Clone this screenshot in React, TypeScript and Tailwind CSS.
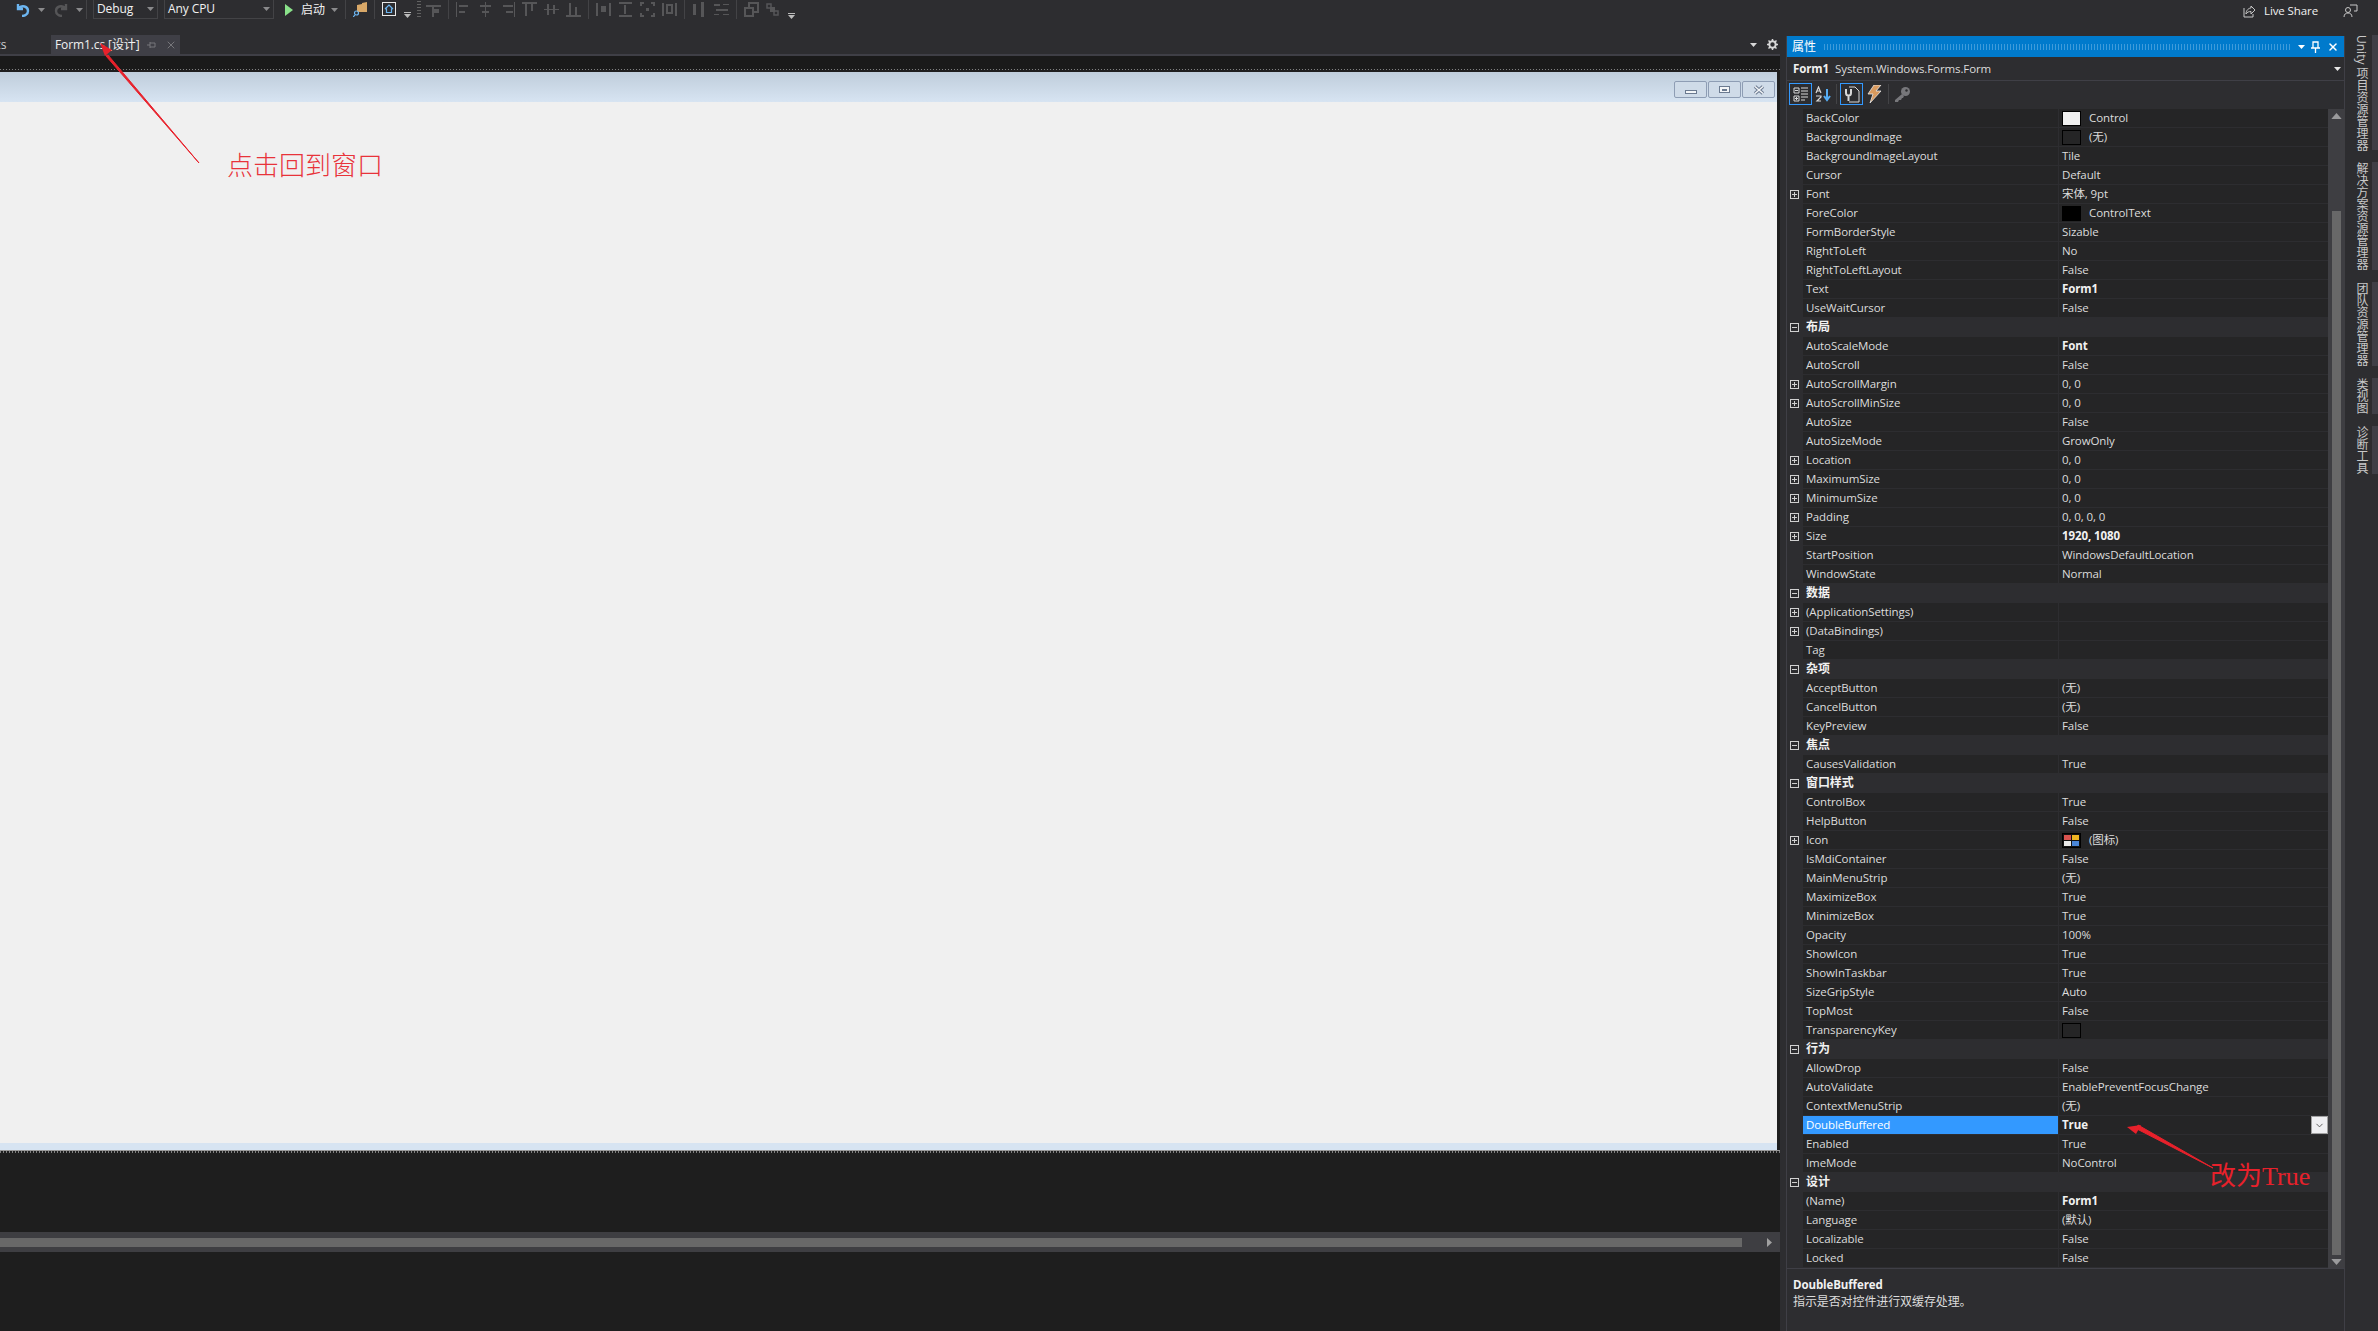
import React from 'react';
import { ChevronDown, X } from 'lucide-react';

const SANS = "font-['Open_Sans','Noto_Sans_CJK_SC',sans-serif]";

type Row = {
  name: string;
  value?: string;
  bold?: boolean;
  expand?: boolean;
  swatch?: string;
  icon?: boolean;
  section?: boolean;
  selected?: boolean;
};

const rows: Row[] = [
  { name: 'BackColor', value: 'Control', swatch: 'bg-[#f0f0f0]' },
  { name: 'BackgroundImage', value: '(无)', swatch: 'bg-[#252526]' },
  { name: 'BackgroundImageLayout', value: 'Tile' },
  { name: 'Cursor', value: 'Default' },
  { name: 'Font', value: '宋体, 9pt', expand: true },
  { name: 'ForeColor', value: 'ControlText', swatch: 'bg-black' },
  { name: 'FormBorderStyle', value: 'Sizable' },
  { name: 'RightToLeft', value: 'No' },
  { name: 'RightToLeftLayout', value: 'False' },
  { name: 'Text', value: 'Form1', bold: true },
  { name: 'UseWaitCursor', value: 'False' },
  { name: '布局', section: true },
  { name: 'AutoScaleMode', value: 'Font', bold: true },
  { name: 'AutoScroll', value: 'False' },
  { name: 'AutoScrollMargin', value: '0, 0', expand: true },
  { name: 'AutoScrollMinSize', value: '0, 0', expand: true },
  { name: 'AutoSize', value: 'False' },
  { name: 'AutoSizeMode', value: 'GrowOnly' },
  { name: 'Location', value: '0, 0', expand: true },
  { name: 'MaximumSize', value: '0, 0', expand: true },
  { name: 'MinimumSize', value: '0, 0', expand: true },
  { name: 'Padding', value: '0, 0, 0, 0', expand: true },
  { name: 'Size', value: '1920, 1080', bold: true, expand: true },
  { name: 'StartPosition', value: 'WindowsDefaultLocation' },
  { name: 'WindowState', value: 'Normal' },
  { name: '数据', section: true },
  { name: '(ApplicationSettings)', value: '', expand: true },
  { name: '(DataBindings)', value: '', expand: true },
  { name: 'Tag', value: '' },
  { name: '杂项', section: true },
  { name: 'AcceptButton', value: '(无)' },
  { name: 'CancelButton', value: '(无)' },
  { name: 'KeyPreview', value: 'False' },
  { name: '焦点', section: true },
  { name: 'CausesValidation', value: 'True' },
  { name: '窗口样式', section: true },
  { name: 'ControlBox', value: 'True' },
  { name: 'HelpButton', value: 'False' },
  { name: 'Icon', value: '(图标)', icon: true, expand: true },
  { name: 'IsMdiContainer', value: 'False' },
  { name: 'MainMenuStrip', value: '(无)' },
  { name: 'MaximizeBox', value: 'True' },
  { name: 'MinimizeBox', value: 'True' },
  { name: 'Opacity', value: '100%' },
  { name: 'ShowIcon', value: 'True' },
  { name: 'ShowInTaskbar', value: 'True' },
  { name: 'SizeGripStyle', value: 'Auto' },
  { name: 'TopMost', value: 'False' },
  { name: 'TransparencyKey', value: '', swatch: 'bg-[#252526]' },
  { name: '行为', section: true },
  { name: 'AllowDrop', value: 'False' },
  { name: 'AutoValidate', value: 'EnablePreventFocusChange' },
  { name: 'ContextMenuStrip', value: '(无)' },
  { name: 'DoubleBuffered', value: 'True', bold: true, selected: true },
  { name: 'Enabled', value: 'True' },
  { name: 'ImeMode', value: 'NoControl' },
  { name: '设计', section: true },
  { name: '(Name)', value: 'Form1', bold: true },
  { name: 'Language', value: '(默认)' },
  { name: 'Localizable', value: 'False' },
  { name: 'Locked', value: 'False' },
];

// 灰色的布局工具按钮，全部是 15x15 的小方块组合
const layoutIcons: number[][][] = [
  [[0, 3, 15, 2], [6, 3, 2, 12], [8, 7, 5, 4]],
  [[0, 0, 1, 15], [3, 3, 9, 2], [3, 9, 6, 2]],
  [[7, 0, 1, 15], [2, 3, 11, 2], [4, 9, 7, 2]],
  [[14, 0, 1, 15], [3, 3, 10, 2], [6, 9, 7, 2]],
  [[0, 0, 15, 2], [3, 2, 2, 12], [9, 2, 2, 7]],
  [[0, 7, 15, 1], [3, 2, 2, 11], [9, 3, 2, 9]],
  [[0, 13, 15, 2], [3, 1, 2, 12], [9, 5, 2, 8]],
  [[0, 1, 2, 13], [13, 1, 2, 13], [5, 4, 5, 6]],
  [[1, 0, 13, 2], [1, 13, 13, 2], [6, 3, 2, 9]],
  [[0, 0, 4, 2], [11, 0, 4, 2], [0, 13, 4, 2], [11, 13, 4, 2], [0, 0, 2, 4], [13, 0, 2, 4], [0, 11, 2, 4], [13, 11, 2, 4], [6, 6, 3, 3]],
  [[0, 1, 2, 13], [13, 1, 2, 13], [4, 2, 7, 2], [4, 10, 7, 2], [4, 4, 2, 6], [9, 4, 2, 6]],
];

const tailIcons: number[][][] = [
  [[1, 2, 3, 11], [9, 0, 3, 15]],
  [[0, 2, 6, 2], [9, 2, 6, 1], [2, 7, 12, 2], [0, 12, 5, 1], [9, 12, 6, 1]],
];

const Blocks = ({ rects }: { rects: number[][] }) => (
  <svg width="15" height="15" viewBox="0 0 15 15" className="shrink-0">
    {rects.map((r, i) => (
      <rect key={i} x={r[0]} y={r[1]} width={r[2]} height={r[3]} fill="#565658" />
    ))}
  </svg>
);

const Caret = ({ color = '#8a8a8c', className = '' }: { color?: string; className?: string }) => (
  <svg width="7" height="4" viewBox="0 0 7 4" className={`shrink-0 ${className}`}>
    <path d="M0 0h7L3.5 4z" fill={color} />
  </svg>
);

const OverflowCaret = () => (
  <svg width="7" height="6" viewBox="0 0 7 6" className="shrink-0 self-end">
    <rect width="7" height="1" fill="#bbb" />
    <path d="M0 2h7L3.5 6z" fill="#bbb" />
  </svg>
);

const Sep = () => <div className="w-px h-[19px] bg-[#434346] shrink-0" />;

const Toolbar = () => (
  <div className="h-[35px] shrink-0 flex items-start text-[#f1f1f1] text-[11.5px] tracking-[-0.1px]">
    <div className="h-[19px] flex items-center pl-[16px] w-[86px]">
      <svg width="14" height="14" viewBox="0 0 14 14" className="shrink-0">
        <path d="M2 1v5h5M3 5c3-3 9-2 9 3 0 3-3 5-6 5" fill="none" stroke="#6cb5f0" strokeWidth="2.4" />
      </svg>
      <Caret className="ml-[8px]" />
      <svg width="14" height="14" viewBox="0 0 14 14" className="ml-[9px] shrink-0">
        <path d="M12 1v5H7M11 5C8 2 2 3 2 8c0 3 3 5 6 5" fill="none" stroke="#555557" strokeWidth="2.4" />
      </svg>
      <Caret className="ml-[8px]" />
    </div>
    <Sep />
    <div className="ml-[6px] w-[65px] h-[19px] border border-t-0 border-[#434346] flex items-center justify-between pl-[3px] pr-[3px]">
      <span className="text-[12px]">Debug</span>
      <Caret />
    </div>
    <div className="ml-[6px] w-[110px] h-[19px] border border-t-0 border-[#434346] flex items-center justify-between pl-[3px] pr-[3px]">
      <span className="text-[12px]">Any CPU</span>
      <Caret />
    </div>
    <div className="ml-[11px] w-[60px] h-[19px] flex items-center">
      <svg width="8" height="12" viewBox="0 0 8 12" className="shrink-0">
        <path d="M0 0l8 6-8 6z" fill="#8ae28a" />
      </svg>
      <span className="ml-[8px] text-[12px]">启动</span>
      <Caret className="ml-[6px]" />
    </div>
    <Sep />
    <svg width="14" height="15" viewBox="0 0 14 15" className="ml-[7px] mr-[7px] mt-[2px] shrink-0">
      <path d="M4 3l5-1V1l5-1v10H4z" fill="#d9a868" />
      <circle cx="3.5" cy="11" r="2" fill="none" stroke="#6cb5f0" strokeWidth="1.2" />
      <path d="M2 13l-2 2" stroke="#6cb5f0" strokeWidth="1.2" />
    </svg>
    <Sep />
    <svg width="14" height="14" viewBox="0 0 14 14" className="ml-[7px] mt-[2px] shrink-0">
      <rect x="0.5" y="0.5" width="13" height="13" fill="none" stroke="#e8e8e8" />
      <path d="M3 7l4-4 4 4M4.5 6.5v4h5v-4" fill="none" stroke="#6cb5f0" strokeWidth="1.2" />
    </svg>
    <div className="ml-[8px] h-[19px] flex items-end pb-[1px] shrink-0">
      <OverflowCaret />
    </div>
    <div className="ml-[6px] w-[4px] h-[17px] bg-[radial-gradient(#666_35%,transparent_40%)] bg-[length:2px_3px] shrink-0" />
    <div className="ml-[5px] h-[19px] flex items-center gap-[7px]">
      <Blocks rects={layoutIcons[0]} />
      <Sep />
      {layoutIcons.slice(1, 7).map((r, i) => <Blocks key={i} rects={r} />)}
      <Sep />
      {layoutIcons.slice(7).map((r, i) => <Blocks key={i} rects={r} />)}
      <Sep />
      {tailIcons.map((r, i) => <Blocks key={i} rects={r} />)}
      <Sep />
      <svg width="15" height="15" viewBox="0 0 15 15" className="shrink-0">
        <path d="M1 6h8v8H1zM5 5V1h9v9h-4" fill="none" stroke="#565658" strokeWidth="2" />
      </svg>
      <svg width="13" height="13" viewBox="0 0 13 13" className="shrink-0">
        <path d="M1 1h4v4H1zM8 8h4v4H8z" fill="none" stroke="#565658" strokeWidth="1.5" />
        <rect x="4" y="4" width="5" height="5" fill="#565658" />
      </svg>
      <div className="ml-[2px] h-[19px] flex items-end">
        <OverflowCaret />
      </div>
    </div>
    <div className="ml-auto h-[22px] flex items-center pr-[20px]">
      <svg width="13" height="13" viewBox="0 0 13 13" className="shrink-0">
        <path d="M1 3v9h9V9M3 9c0-4 3-6 5-6V1l4 4-4 4V6.500C6 6.500 4 7 3 9z" fill="none" stroke="#c8c8c8" />
      </svg>
      <span className="ml-[8px]">Live Share</span>
      <svg width="15" height="14" viewBox="0 0 15 14" className="ml-[25px] shrink-0">
        <path d="M7 1h7v6h-3" fill="none" stroke="#c8c8c8" />
        <circle cx="5" cy="6" r="2.5" fill="none" stroke="#c8c8c8" />
        <path d="M1 13c0-3 2-4 4-4s4 1 4 4" fill="none" stroke="#c8c8c8" />
      </svg>
    </div>
  </div>
);

const WinButton = ({ children }: { children: React.ReactNode }) => (
  <div className="w-[33px] h-[17px] border border-[#8e9db4] rounded-[2px] bg-[#cfdbe8] flex items-center justify-center">
    {children}
  </div>
);

const DocumentArea = () => (
  <div className="w-[1780px] shrink-0 flex flex-col">
    <div className="h-[19px] flex items-stretch text-[12px] tracking-[-0.1px] text-[#f1f1f1] shrink-0">
      <div className="w-[51px] overflow-hidden flex items-center pt-[1px]">
        <span className="-ml-[8px] text-[#d0d0d0]">.cs</span>
      </div>
      <div className="w-[129px] bg-[#3f3f46] flex items-center pl-[4px] pt-[1px]">
        <span>Form1.cs [设计]</span>
        <svg width="10" height="10" viewBox="0 0 10 10" className="ml-auto shrink-0">
          <path d="M3 2v6M3 3h5v4H3M0 5h3" fill="none" stroke="#77777b" />
        </svg>
        <X size={12} strokeWidth={2} className="ml-[8px] mr-[3px] text-[#77777b] shrink-0" />
      </div>
      <div className="ml-auto flex items-center pr-[2px]">
        <Caret color="#d8d8d8" />
        <svg width="11" height="11" viewBox="0 0 11 11" className="ml-[10px] shrink-0">
          <circle cx="5.500" cy="5.500" r="3.200" fill="none" stroke="#d8d8d8" strokeWidth="2" />
          <path d="M5.500 0v2M5.500 9v2M0 5.500h2M9 5.500h2M1.500 1.500l1.500 1.500M8 8l1.500 1.500M1.500 9.500L3 8M8 3l1.500-1.500" stroke="#d8d8d8" strokeWidth="1.500" />
        </svg>
      </div>
    </div>
    <div className="h-[2px] bg-[#3f3f46] shrink-0" />
    <div className="flex-1 flex flex-col bg-[#1e1e1e]">
      <div className="h-[13px] bg-[#1a1a1a] shrink-0" />
      <div className="h-[1px] shrink-0 bg-[repeating-linear-gradient(90deg,#808080_0,#808080_1px,transparent_1px,transparent_3px)]" />
      <div className="h-[2px] shrink-0" />
      <div className="mr-[3px] h-[30px] shrink-0 bg-gradient-to-b from-[#bfcddb] to-[#d7e4f2] flex items-start justify-end gap-[1px] pt-[9px] pr-[2px]">
        <WinButton>
          <div className="w-[10px] h-[2px] mt-[5px] bg-[#f4f6f8] border border-[#6b7a90] box-content" />
        </WinButton>
        <WinButton>
          <div className="w-[9px] h-[5px] border border-[#6b7a90] bg-[#f4f6f8] box-content flex items-center justify-center">
            <div className="w-[5px] h-[2px] bg-[#6b7a90]" />
          </div>
        </WinButton>
        <WinButton>
          <svg width="12" height="10" viewBox="0 0 12 10" className="shrink-0">
            <path d="M2 1.500l8 7M10 1.500l-8 7" stroke="#6b7a90" strokeWidth="3.500" />
            <path d="M2 1.500l8 7M10 1.500l-8 7" stroke="#f4f6f8" strokeWidth="1.500" />
          </svg>
        </WinButton>
      </div>
      <div className="mr-[3px] h-[1041px] shrink-0 bg-[#f0f0f0]" />
      <div className="mr-[3px] h-[7px] shrink-0 bg-[#d7e4f2]" />
      <div className="h-[1px] shrink-0 bg-[#9a9a9a]" />
      <div className="h-[2px] shrink-0 bg-[repeating-linear-gradient(90deg,#808080_0,#808080_1px,transparent_1px,transparent_3px)]" />
      <div className="h-[79px] shrink-0" />
      <div className="h-[20px] shrink-0 bg-[#3e3e42] flex items-center pr-[8px]">
        <div className="w-[1742px] h-[9px] bg-[#686868] shrink-0" />
        <svg width="5" height="9" viewBox="0 0 5 9" className="ml-auto shrink-0">
          <path d="M0 0l5 4.500-5 4.500z" fill="#a0a0a0" />
        </svg>
      </div>
    </div>
  </div>
);

const ExpandBox = ({ minus }: { minus?: boolean }) => (
  <svg width="9" height="9" viewBox="0 0 9 9" className="shrink-0">
    <rect x="0.5" y="0.5" width="8" height="8" fill="none" stroke="#d0d0d0" />
    <path d="M2 4.500h5" stroke="#d0d0d0" />
    {!minus && <path d="M4.500 2v5" stroke="#d0d0d0" />}
  </svg>
);

const PropRow = ({ row }: { row: Row }) => {
  if (row.section) {
    return (
      <div className="h-[19px] flex items-center bg-[#2d2d30] font-bold text-[12px] text-[#f1f1f1]">
        <div className="w-[16px] pl-[3px] flex items-center shrink-0">
          <ExpandBox minus />
        </div>
        <span className="pl-[3px] pb-[1px]">{row.name}</span>
      </div>
    );
  }
  return (
    <div className="h-[19px] flex items-stretch bg-[#2d2d30]">
      <div className="w-[16px] pl-[3px] flex items-center shrink-0">
        {row.expand && <ExpandBox />}
      </div>
      <div className={`w-[255px] shrink-0 h-[18px] pl-[3px] flex items-center ${row.selected ? 'bg-[#3399ff] text-white' : 'bg-[#252526]'}`}>
        {row.name}
      </div>
      <div className={`ml-px flex-1 h-[18px] bg-[#252526] pl-[3px] flex items-center ${row.bold ? 'font-bold text-[#f1f1f1]' : ''}`}>
        {row.swatch && <div className={`w-[19px] h-[15px] border border-black shrink-0 mr-[8px] ${row.swatch}`} />}
        {row.icon && (
          <div className="w-[19px] h-[15px] border border-black bg-[#111] shrink-0 mr-[8px] grid grid-cols-2 gap-px p-px">
            <div className="bg-[#d9534f]" />
            <div className="bg-[#eeb422]" />
            <div className="bg-[#e8e8e8]" />
            <div className="bg-[#4a86d8]" />
          </div>
        )}
        <span>{row.value}</span>
        {row.selected && (
          <div className="ml-auto w-[17px] h-[18px] bg-[#efeff2] border border-[#a0a0a0] flex items-center justify-center shrink-0">
            <ChevronDown size={11} className="text-[#555]" />
          </div>
        )}
      </div>
    </div>
  );
};

const PropertiesPanel = () => (
  <div className="w-[559px] shrink-0 mt-px ml-[6px] h-[1295px] flex flex-col border-x border-[#3f3f46] bg-[#2d2d30] text-[11.5px] tracking-[-0.1px] text-[#dcdcdc]">
    <div className="h-[21px] shrink-0 bg-[#007acc] flex items-center text-white text-[12px] pl-[5px] pr-[5px]">
      <span>属性</span>
      <div className="mx-[8px] flex-1 h-[6px] bg-[repeating-linear-gradient(90deg,#59a9e0_0,#59a9e0_1px,transparent_1px,transparent_3px)] opacity-70" />
      <Caret color="#fff" />
      <svg width="9" height="12" viewBox="0 0 9 12" className="ml-[6px] shrink-0">
        <path d="M2 1h5v6H2zM0 7h9M4.500 7v5" fill="none" stroke="#fff" strokeWidth="1.300" />
      </svg>
      <X size={12} strokeWidth={3} className="ml-[7px] shrink-0" />
    </div>
    <div className="h-[24px] shrink-0 flex items-center pl-[6px] border-b border-[#3f3f46]">
      <span className="font-bold text-[#f1f1f1]">Form1</span>
      <span className="ml-[6px]">System.Windows.Forms.Form</span>
      <Caret color="#e8e8e8" className="ml-auto mr-[3px]" />
    </div>
    <div className="h-[26px] shrink-0 flex items-center pl-[2px]">
      <div className="w-[23px] h-[22px] border border-[#3399ff] flex items-center justify-center">
        <svg width="16" height="16" viewBox="0 0 16 16">
          <path d="M1 2h5v5H1zM1 10h5v5H1z" fill="none" stroke="#d8d8d8" />
          <path d="M8 2h7M8 5h7M8 8h7M8 11h7M8 14h4M2 4.500h3M2 12.500h3M3.500 11v3" stroke="#d8d8d8" />
        </svg>
      </div>
      <svg width="16" height="17" viewBox="0 0 16 17" className="ml-[3px] shrink-0">
        <path d="M1 7l2.500-6L6 7M2 5h3M1 10h5v1l-4 4h4" fill="none" stroke="#d8d8d8" strokeWidth="1.200" />
        <path d="M12 3v10M9 10l3 4 3-4" fill="none" stroke="#57aef5" strokeWidth="2" />
      </svg>
      <div className="ml-[5px] w-px h-[20px] bg-[#434346]" />
      <div className="ml-[3px] w-[23px] h-[22px] border border-[#3399ff] flex items-center justify-center">
        <svg width="17" height="17" viewBox="0 0 17 17">
          <path d="M6 1h6l4 4v11H6" fill="none" stroke="#d8d8d8" />
          <path d="M3 3v4a2.500 2.500 0 0 0 5 0V3M5.500 9v6" fill="none" stroke="#d8d8d8" strokeWidth="2" />
        </svg>
      </div>
      <svg width="16" height="18" viewBox="0 0 16 18" className="ml-[3px] shrink-0">
        <path d="M8 0h7l-5 6h5L4 18l3-9H2z" fill="#d99a5e" stroke="#e8e8e8" strokeWidth="0.800" />
      </svg>
      <div className="ml-[6px] w-px h-[20px] bg-[#434346]" />
      <svg width="17" height="17" viewBox="0 0 17 17" className="ml-[5px] shrink-0">
        <circle cx="11.500" cy="5.500" r="4.500" fill="#77777b" />
        <path d="M8 8l-7 6v2h3l1-2h2l1-2h1l1-2z" fill="#77777b" />
        <circle cx="12.500" cy="4.500" r="1.200" fill="#2d2d30" />
      </svg>
    </div>
    <div className="h-[2px] shrink-0" />
    <div className="flex shrink-0 h-[1159px]">
      <div className="w-[541px] shrink-0 flex flex-col">
        {rows.map((row) => (
          <PropRow key={row.name} row={row} />
        ))}
      </div>
      <div className="w-[17px] shrink-0 bg-[#3e3e42] flex flex-col items-center pt-[5px] pb-[4px]">
        <Caret color="#9a9a9c" className="scale-150 rotate-180" />
        <div className="w-[9px] mt-[93px] flex-1 mb-[5px] bg-[#686868]" />
        <Caret color="#9a9a9c" className="scale-150" />
      </div>
    </div>
    <div className="flex-1 border-t border-[#3f3f46] pl-[6px] pt-[7px] leading-[17px] bg-[#2d2d30]">
      <div className="font-bold text-[#f1f1f1]">DoubleBuffered</div>
      <div className="text-[12px]">指示是否对控件进行双缓存处理。</div>
    </div>
  </div>
);

const tabs = [
  { label: 'Unity 项目资源管理器', h: 'h-[115px]' },
  { label: '解决方案资源管理器', h: 'h-[108px]' },
  { label: '团队资源管理器', h: 'h-[84px]' },
  { label: '类视图', h: 'h-[36px]' },
  { label: '诊断工具', h: 'h-[48px]' },
];

const SideRail = () => (
  <div className="flex-1 flex flex-col gap-[12px] text-[12px] text-[#c8c8c8]">
    {tabs.map((t) => (
      <div key={t.label} className={`${t.h} flex items-stretch justify-end`}>
        <div className="flex-1 pr-[3px] leading-[16px] whitespace-nowrap [writing-mode:vertical-rl]">{t.label}</div>
        <div className="w-[6px] bg-[#3f3f46]" />
      </div>
    ))}
  </div>
);

export default function App() {
  return (
    <div className={`relative w-[2378px] h-[1331px] overflow-hidden bg-[#2d2d30] flex flex-col ${SANS}`}>
      <Toolbar />
      <div className="flex-1 flex items-start min-h-0">
        <div className="h-full flex">
          <DocumentArea />
        </div>
        <PropertiesPanel />
        <SideRail />
      </div>

      {/* 截图上的红色标注 */}
      <svg width="2378" height="1331" viewBox="0 0 2378 1331" className="absolute inset-0 pointer-events-none">
        <path d="M199 163L108 55l-2 1z" fill="#e8212b" stroke="#e8212b" strokeWidth="1" />
        <path d="M100 43l12 7-7 6z" fill="#e8212b" />
        <path d="M2213 1168l-76-39 1-4z" fill="#e8212b" stroke="#e8212b" strokeWidth="1" />
        <path d="M2127 1127l14-2-5 9z" fill="#e8212b" />
      </svg>
      <div className="absolute left-[227px] top-[150px] text-[26px] leading-[28px] font-light text-[#e8333a] font-['Noto_Sans_CJK_SC',sans-serif]">点击回到窗口</div>
      <div className="absolute left-[2210px] top-[1163px] text-[26px] leading-[28px] text-[#e8212b] font-['Liberation_Serif','Noto_Sans_CJK_SC',serif]">改为True</div>
    </div>
  );
}
